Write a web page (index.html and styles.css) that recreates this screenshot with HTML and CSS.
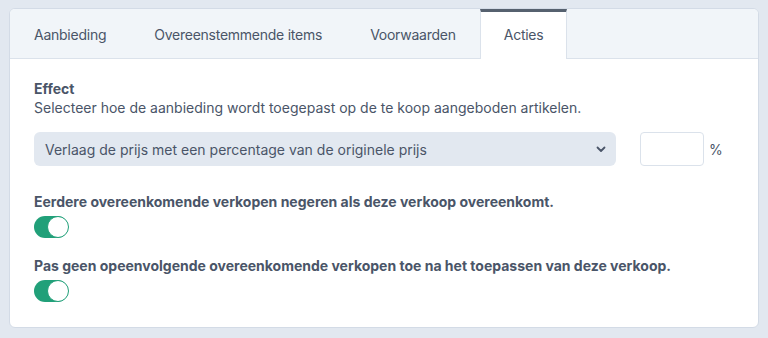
FILE: index.html
```html
<!DOCTYPE html>
<html lang="nl">
<head>
  <meta charset="UTF-8" />
  <title>Aanbieding - Acties</title>
  <link rel="stylesheet" href="styles.css">
</head>
<body>

  <div class="card">
    <!-- Tabs -->
    <div class="tabs">
      <div class="tab">Aanbieding</div>
      <div class="tab">Overeenstemmende items</div>
      <div class="tab">Voorwaarden</div>
      <div class="tab active">Acties</div>
    </div>

    <!-- Acties -->
    <div class="panel">
      <div class="field-title">Effect</div>
      <div class="field-help">Selecteer hoe de aanbieding wordt toegepast op de te koop aangeboden artikelen.</div>

      <div class="effect-row">
        <div class="select">
          <span>Verlaag de prijs met een percentage van de originele prijs</span>
          <svg width="10" height="7" viewBox="0 0 10 7"><path d="M1.5 1.5 L5 5 L8.5 1.5" fill="none" stroke="#4a5568" stroke-width="1.8" stroke-linecap="round" stroke-linejoin="round"/></svg>
        </div>
        <input class="amount" type="text">
        <span class="unit">%</span>
      </div>

      <div class="option">
        <div class="option-label">Eerdere overeenkomende verkopen negeren als deze verkoop overeenkomt.</div>
        <span class="toggle on"></span>
      </div>

      <div class="option">
        <div class="option-label">Pas geen opeenvolgende overeenkomende verkopen toe na het toepassen van deze verkoop.</div>
        <span class="toggle on"></span>
      </div>
    </div>
  </div>

</body>
</html>
```

FILE: styles.css
```css
body {
  margin: 0;
  padding: 8px 9px 10px 9px;
  background: #e2e8f0;
  font-family: Inter, "Noto Sans", sans-serif;
  color: #4a5568;
  font-size: 14px;
}

.card {
  background: #fff;
  border: 1px solid #d3dbe6;
  border-radius: 6px;
  overflow: hidden;
}

.tabs {
  display: flex;
  height: 49px;
  background: #f1f5f9;
  border-bottom: 1px solid #dbe2eb;
}

.tab {
  display: flex;
  align-items: center;
  padding: 0 24px;
  padding-top: 1px;
  font-size: 14px;
  letter-spacing: -0.25px;
  color: #4a5568;
}

.tab.active {
  background: #fff;
  border-top: 3px solid #56616f;
  border-left: 1px solid #dbe2eb;
  border-right: 1px solid #dbe2eb;
  margin-bottom: -1px;
  padding: 0 23px;
  padding-bottom: 2px;
}

.panel {
  padding: 21px 24px 25px 24px;
}

.field-title {
  font-weight: 700;
  line-height: 18px;
}

.field-help {
  line-height: 18px;
  margin-top: 1px;
}

.effect-row {
  display: flex;
  align-items: center;
  margin-top: 15px;
}

.select {
  flex: 0 0 582px;
  box-sizing: border-box;
  height: 34px;
  display: flex;
  align-items: center;
  justify-content: space-between;
  padding: 0 10px 0 11px;
  background: #e2e8f0;
  border-radius: 6px;
}

.amount {
  box-sizing: border-box;
  width: 64px;
  height: 34px;
  margin-left: 24px;
  border: 1px solid #dbe2eb;
  border-radius: 4px;
  background: #fff;
}

.unit {
  margin-left: 5px;
}

.option {
  margin-top: 26px;
}

.option + .option {
  margin-top: 18px;
}

.option-label {
  font-weight: 700;
  line-height: 20px;
}

.toggle {
  display: block;
  position: relative;
  width: 34px;
  height: 22px;
  margin-top: 4px;
  border-radius: 11px;
  background: #cbd5e0;
}

.toggle.on {
  background: #21a079;
}

.toggle::after {
  content: "";
  position: absolute;
  top: 1px;
  left: 1px;
  width: 18px;
  height: 18px;
  border-radius: 50%;
  background: #fff;
  border: 1px solid #21a079;
}

.toggle.on::after {
  left: 13px;
  top: 0;
  width: 20px;
  height: 20px;
}
```
